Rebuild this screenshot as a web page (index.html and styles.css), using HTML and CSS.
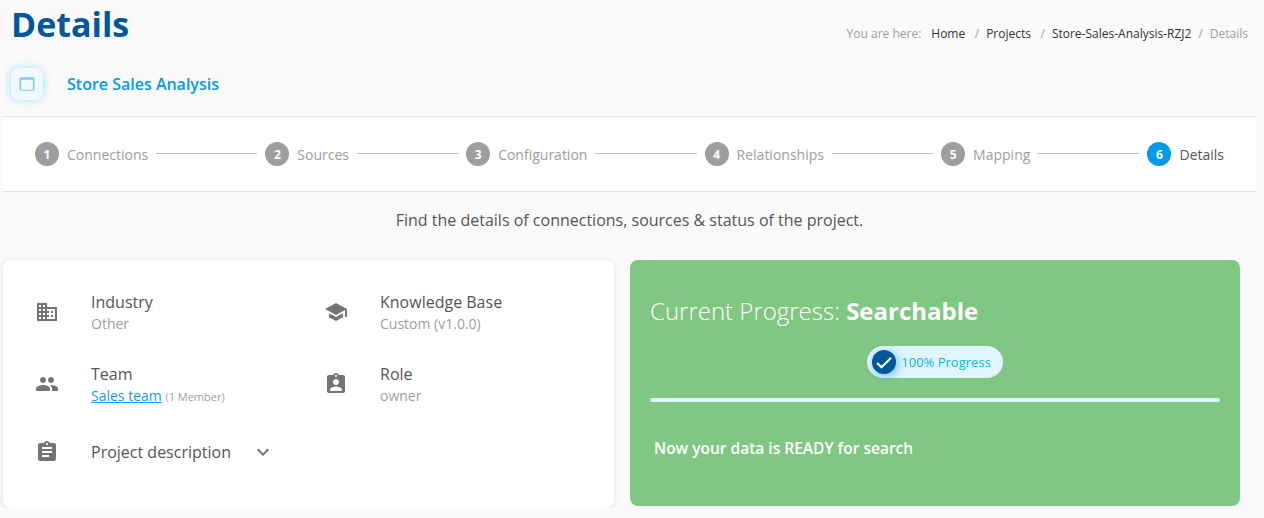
FILE: index.html
```html
<!DOCTYPE html>
<html lang="en">
<head>
  <meta charset="UTF-8">
  <title>Project Details</title>
  <link rel="stylesheet" href="styles.css">
</head>
<body>
  <div class="page-head">
    <h1>Details</h1>
    <div class="breadcrumb">
      <span class="crumb-label">You are here:</span>
      <a href="#">Home</a>
      <span class="crumb-sep">/</span>
      <a href="#">Projects</a>
      <span class="crumb-sep">/</span>
      <a href="#">Store-Sales-Analysis-RZJ2</a>
      <span class="crumb-sep">/</span>
      <span class="crumb-current">Details</span>
    </div>
  </div>

  <div class="project-row">
    <div class="project-icon">
      <svg viewBox="0 0 24 24" width="20" height="20"><path d="M19 4H5c-1.11 0-2 .9-2 2v12c0 1.1.89 2 2 2h14c1.1 0 2-.9 2-2V6c0-1.1-.89-2-2-2zm0 14.8H5V7h14v11.8z"/></svg>
    </div>
    <span class="project-name">Store Sales Analysis</span>
  </div>

  <div class="stepper">
    <div class="step"><span class="step-num">1</span>Connections</div>
    <div class="step-line"></div>
    <div class="step"><span class="step-num">2</span>Sources</div>
    <div class="step-line"></div>
    <div class="step"><span class="step-num">3</span>Configuration</div>
    <div class="step-line"></div>
    <div class="step"><span class="step-num">4</span>Relationships</div>
    <div class="step-line"></div>
    <div class="step"><span class="step-num">5</span>Mapping</div>
    <div class="step-line"></div>
    <div class="step active"><span class="step-num">6</span>Details</div>
  </div>

  <p class="intro">Find the details of connections, sources &amp; status of the project.</p>

  <div class="cards">
    <div class="card info-card">
      <div class="info-grid">
        <div class="info-item">
          <svg class="info-icon" viewBox="0 0 24 24"><path d="M12 7V3H2v18h20V7H12zM6 19H4v-2h2v2zm0-4H4v-2h2v2zm0-4H4V9h2v2zm0-4H4V5h2v2zm4 12H8v-2h2v2zm0-4H8v-2h2v2zm0-4H8V9h2v2zm0-4H8V5h2v2zm10 12h-8v-2h2v-2h-2v-2h2v-2h-2V9h8v10zm-2-8h-2v2h2v-2zm0 4h-2v2h2v-2z"/></svg>
          <div>
            <div class="info-title">Industry</div>
            <div class="info-sub">Other</div>
          </div>
        </div>
        <div class="info-item">
          <svg class="info-icon" viewBox="0 0 24 24"><path d="M5 13.18v4L12 21l7-3.82v-4L12 17l-7-3.82zM12 3L1 9l11 6 9-4.91V17h2V9L12 3z"/></svg>
          <div>
            <div class="info-title">Knowledge Base</div>
            <div class="info-sub">Custom (v1.0.0)</div>
          </div>
        </div>
        <div class="info-item">
          <svg class="info-icon" viewBox="0 0 24 24"><path d="M16 11c1.66 0 2.99-1.34 2.99-3S17.66 5 16 5c-1.66 0-3 1.34-3 3s1.34 3 3 3zm-8 0c1.66 0 2.99-1.34 2.99-3S9.66 5 8 5C6.34 5 5 6.34 5 8s1.34 3 3 3zm0 2c-2.33 0-7 1.17-7 3.5V19h14v-2.5c0-2.33-4.67-3.5-7-3.5zm8 0c-.29 0-.62.02-.97.05 1.16.84 1.97 1.97 1.97 3.45V19h6v-2.5c0-2.33-4.67-3.5-7-3.5z"/></svg>
          <div>
            <div class="info-title">Team</div>
            <div class="info-sub"><a href="#">Sales team</a> <small>(1 Member)</small></div>
          </div>
        </div>
        <div class="info-item">
          <svg class="info-icon" viewBox="0 0 24 24"><path d="M19 3h-4.18C14.4 1.84 13.3 1 12 1c-1.3 0-2.4.84-2.82 2H5c-1.1 0-2 .9-2 2v14c0 1.1.9 2 2 2h14c1.1 0 2-.9 2-2V5c0-1.1-.9-2-2-2zm-7 0c.55 0 1 .45 1 1s-.45 1-1 1-1-.45-1-1 .45-1 1-1zm0 4c1.66 0 3 1.34 3 3s-1.34 3-3 3-3-1.34-3-3 1.34-3 3-3zm6 12H6v-1.4c0-2 4-3.1 6-3.1s6 1.1 6 3.1V19z"/></svg>
          <div>
            <div class="info-title">Role</div>
            <div class="info-sub">owner</div>
          </div>
        </div>
        <div class="info-item description">
          <svg class="info-icon" viewBox="0 0 24 24"><path d="M19 3h-4.18C14.4 1.84 13.3 1 12 1c-1.3 0-2.4.84-2.82 2H5c-1.1 0-2 .9-2 2v14c0 1.1.9 2 2 2h14c1.1 0 2-.9 2-2V5c0-1.1-.9-2-2-2zm-7 0c.55 0 1 .45 1 1s-.45 1-1 1-1-.45-1-1 .45-1 1-1zm2 14H7v-2h7v2zm3-4H7v-2h10v2zm0-4H7V7h10v2z"/></svg>
          <div class="info-title">Project description</div>
          <svg class="chevron" viewBox="0 0 24 24"><path d="M16.59 8.59L12 13.17 7.41 8.59 6 10l6 6 6-6z"/></svg>
        </div>
      </div>
    </div>

    <div class="card progress-card">
      <h2>Current Progress: <b>Searchable</b></h2>
      <div class="pill-row">
        <div class="pill">
          <span class="pill-check">
            <svg viewBox="0 0 24 24" width="20" height="20"><path d="M9 16.6L4.6 12.2l-1.8 1.8L9 20.2 21.4 7.8 19.6 6z"/></svg>
          </span>
          100% Progress
        </div>
      </div>
      <div class="progress-bar"></div>
      <p class="progress-note">Now your data is READY for search</p>
    </div>
  </div>
</body>
</html>
```

FILE: styles.css
```css
body {
  margin: 0;
  background: #fafafa;
  font-family: 'Open Sans', Arial, sans-serif;
  color: #555;
  overflow: hidden;
}
a {
  text-decoration: none;
  color: inherit;
}
/* Page header */
.page-head {
  display: flex;
  justify-content: space-between;
  align-items: flex-start;
  padding: 0 16px 0 11px;
  height: 68px;
}
h1 {
  margin: 0;
  font-size: 34px;
  line-height: 49px;
  font-weight: 700;
  color: #01579b;
}
.breadcrumb {
  display: flex;
  gap: 7px;
  margin-top: 26px;
  font-size: 12px;
  line-height: 16px;
  color: #333;
}
.breadcrumb a:not(:last-of-type) {
  margin-right: 2.5px;
}
.crumb-label {
  margin-right: 3px;
  color: #9e9e9e;
}
.crumb-sep, .crumb-current {
  color: #9e9e9e;
}
.project-row {
  display: flex;
  align-items: center;
  height: 32px;
  padding-left: 11px;
}
.project-icon {
  width: 32px;
  height: 32px;
  border-radius: 8px;
  background: #f0f9ff;
  box-shadow: 0 0 10px rgba(129,212,250,0.75);
  display: flex;
  align-items: center;
  justify-content: center;
  fill: #81c9f5;
}
.project-name {
  margin-left: 24px;
  font-size: 16px;
  font-weight: 600;
  color: #039be5;
}
/* Stepper */
.stepper {
  display: flex;
  align-items: center;
  gap: 8px;
  height: 74px;
  margin: 16px 8px 0 3px;
  padding: 0 32px;
  background: #fff;
  border-top: 1px solid #e0e0e0;
  border-bottom: 1px solid #e0e0e0;
}
.step {
  display: flex;
  align-items: center;
  gap: 8px;
  font-size: 14px;
  color: #9e9e9e;
  white-space: nowrap;
}
.step.active {
  color: #555;
}
.step-num {
  width: 24px;
  height: 24px;
  border-radius: 50%;
  background: #9e9e9e;
  color: #fff;
  font-size: 12px;
  font-weight: 700;
  display: flex;
  align-items: center;
  justify-content: center;
}
.step.active .step-num {
  background: #039be5;
}
.step-line {
  flex: 1;
  height: 1px;
  margin-bottom: 2px;
  background: #bdbdbd;
}
.intro {
  margin: 0;
  padding: 17px 8px 0 3px;
  height: 51px;
  font-size: 16px;
  line-height: 22px;
  text-align: center;
}
/* Cards */
.cards {
  display: flex;
  align-items: flex-start;
  gap: 16px;
  padding-left: 3px;
}
.card {
  width: 611px;
  border-radius: 8px;
  box-sizing: border-box;
}
.info-card {
  height: 248px;
  padding: 28px 24px 0 32px;
  background: #fff;
  box-shadow: 0 1px 6px rgba(0,0,0,0.1);
}
.info-grid {
  display: grid;
  grid-template-columns: 289px 1fr;
  row-gap: 24px;
}
.info-item {
  display: flex;
  align-items: center;
  gap: 32px;
  height: 48px;
}
.info-item.description {
  grid-column: 1 / 3;
  height: 32px;
  margin-top: 4px;
}
.info-icon {
  width: 24px;
  height: 24px;
  flex: none;
  fill: #757575;
}
.info-title {
  font-size: 16px;
  line-height: 24px;
}
.info-sub {
  font-size: 14px;
  line-height: 20px;
  color: #9e9e9e;
}
.info-sub a {
  color: #2196f3;
  text-decoration: underline;
}
.info-sub small {
  font-size: 11px;
}
.chevron {
  width: 24px;
  height: 24px;
  margin-left: -12px;
  fill: #757575;
}
.progress-card {
  width: 610px;
  height: 246px;
  padding: 34px 20px 0 20px;
  background: #81c784;
  color: #fff;
}
.progress-card h2 {
  margin: 0;
  font-size: 24px;
  line-height: 34px;
  font-weight: 300;
}
.progress-card h2 b {
  font-weight: 700;
}
.pill-row {
  display: flex;
  justify-content: center;
  margin-top: 18px;
}
.pill {
  display: flex;
  align-items: center;
  gap: 5px;
  height: 32px;
  padding: 0 12px 0 5px;
  border-radius: 16px;
  background: #e1f5fe;
  color: #00bcd4;
  font-size: 13px;
}
.pill-check {
  width: 24px;
  height: 24px;
  border-radius: 50%;
  background: #01579b;
  box-shadow: 2px 2px 8px rgba(33,150,243,0.6);
  display: flex;
  align-items: center;
  justify-content: center;
  fill: #fff;
}
.progress-bar {
  height: 4px;
  margin-top: 20px;
  border-radius: 2px;
  background: #e1f5fe;
}
.progress-note {
  margin: 35px 0 0 4px;
  font-size: 15.5px;
  line-height: 22px;
  font-weight: 600;
}
```
